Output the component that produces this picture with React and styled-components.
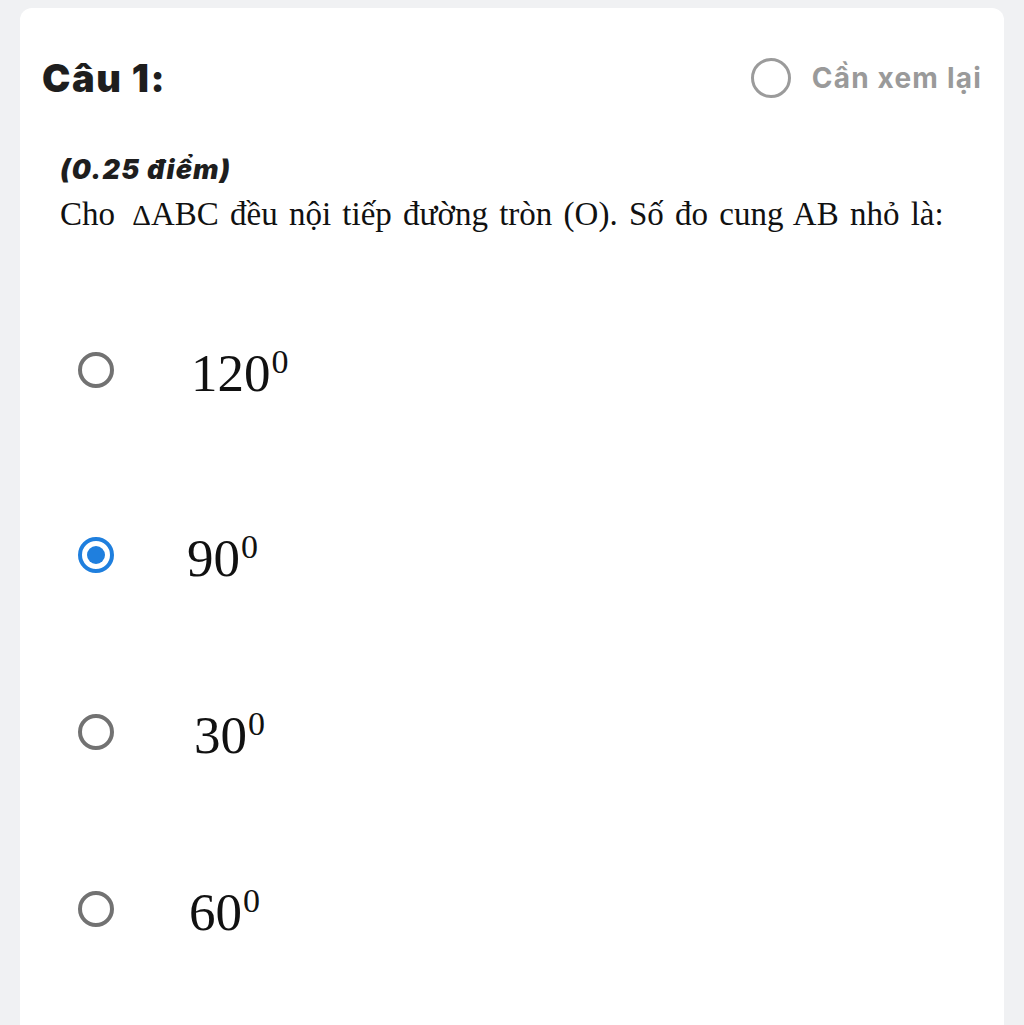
import React from "react";
import styled, { createGlobalStyle } from "styled-components";

const GlobalStyle = createGlobalStyle`
  html, body {
    margin: 0;
    padding: 0;
    background: #f0f1f3;
  }
  body {
    font-family: Inter, "Noto Sans", sans-serif;
  }
`;

const Page = styled.div`
  min-height: 1025px;
  padding: 8px 20px 0 20px;
  box-sizing: border-box;
`;

const Card = styled.div`
  background: #ffffff;
  border-radius: 12px;
  min-height: 1040px;
  padding: 47px 22px 0 22px;
  box-sizing: border-box;
`;

const Header = styled.div`
  display: flex;
  align-items: center;
  justify-content: space-between;
  height: 46px;
`;

const Title = styled.h2`
  margin: 0;
  font-family: Inter, "Noto Sans", sans-serif;
  font-size: 38px;
  line-height: 46px;
  font-weight: 900;
  color: #1e1e1e;
  letter-spacing: 1.6px;
`;

const Review = styled.label`
  display: flex;
  align-items: center;
  gap: 21px;
  font-family: Inter, "Noto Sans", sans-serif;
  font-size: 28px;
  font-weight: 700;
  letter-spacing: 1.2px;
  color: #9a9a9a;
`;

const ReviewCircle = styled.span`
  width: 40px;
  height: 40px;
  border-radius: 50%;
  border: 3.5px solid #9b9b9b;
  box-sizing: border-box;
`;

const Question = styled.div`
  padding: 54px 18px 0 18px;
`;

const Points = styled.div`
  font-family: Inter, "Noto Sans", sans-serif;
  font-size: 27px;
  line-height: 30px;
  font-weight: 900;
  font-style: italic;
  letter-spacing: 1.2px;
  color: #1e1e1e;
`;

const Statement = styled.p`
  margin: 10px 0 0 0;
  font-family: "Liberation Serif", "Times New Roman", serif;
  font-size: 33px;
  line-height: 38px;
  word-spacing: 3px;
  color: #111;
  white-space: nowrap;
`;

const Delta = styled.span`
  font-size: 29px;
  margin-left: 6px;
`;

const Options = styled.div`
  display: flex;
  flex-direction: column;
  margin-top: 47px;
`;

const Option = styled.div`
  display: flex;
  align-items: center;
  height: 177px;

  &:first-child {
    margin-bottom: 8px;
  }
`;

const Radio = styled.span`
  flex: none;
  position: relative;
  width: 36px;
  height: 36px;
  margin-left: 18px;
  border-radius: 50%;
  border: 4px solid ${({ checked }) => (checked ? "#1f7fde" : "#727272")};
  box-sizing: border-box;

  &::after {
    content: "";
    display: ${({ checked }) => (checked ? "block" : "none")};
    position: absolute;
    left: 5px;
    top: 5px;
    width: 18px;
    height: 18px;
    border-radius: 50%;
    background: #1f7fde;
  }
`;

const Value = styled.span`
  margin-left: ${({ shift }) => 77 + shift}px;
  padding-top: 8px;
  font-family: "Liberation Serif", "Times New Roman", serif;
  font-size: 53px;
  line-height: 1;
  color: #111;
`;

const Degree = styled.sup`
  font-size: 34px;
  vertical-align: 18px;
  line-height: 0;
  margin-left: 1px;
`;

const answers = [
  { value: "120", shift: 0 },
  { value: "90", shift: -4 },
  { value: "30", shift: 3 },
  { value: "60", shift: -2 },
];

export default function App() {
  const selected = 1;

  return (
    <>
      <GlobalStyle />
      <Page>
        <Card>
          <Header>
            <Title>Câu 1:</Title>
            <Review>
              <ReviewCircle />
              Cần xem lại
            </Review>
          </Header>

          <Question>
            <Points>(0.25 điểm)</Points>
            <Statement>
              Cho <Delta>Δ</Delta>ABC đều nội tiếp đường tròn (O). Số đo cung AB nhỏ là:
            </Statement>

            <Options>
              {answers.map((a, i) => (
                <Option key={a.value}>
                  <Radio checked={i === selected} />
                  <Value shift={a.shift}>
                    {a.value}
                    <Degree>0</Degree>
                  </Value>
                </Option>
              ))}
            </Options>
          </Question>
        </Card>
      </Page>
    </>
  );
}
